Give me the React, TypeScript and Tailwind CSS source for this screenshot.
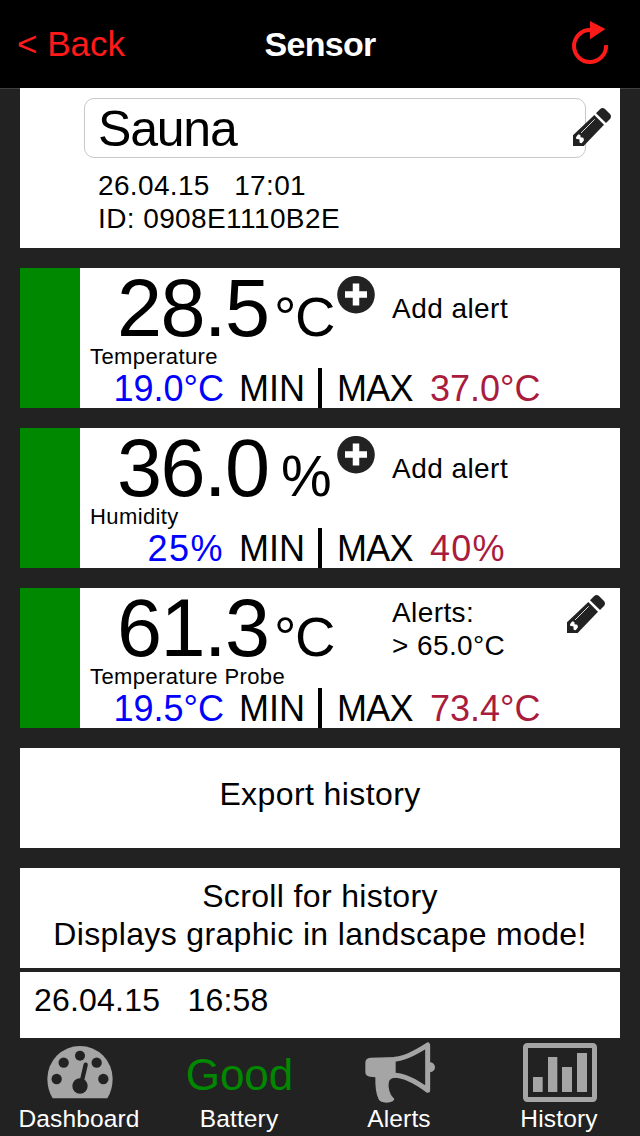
import type { ReactNode } from "react";

function RefreshIcon() {
  return (
    <svg width="40" height="46" viewBox="750 60 120 138" className="block">
      <path d="M858 135 A48 48 0 1 1 810 90" fill="none" stroke="#ff1a1a" strokeWidth="12" />
      <path d="M810 63 L856 87 L810 118 Z" fill="#ff1a1a" />
    </svg>
  );
}

function PencilIcon() {
  return (
    <svg width="38" height="38" viewBox="0 0 114 114" className="block">
      <path d="M64 21 L93 50 L32 114 H0 V82 Z" fill="#222" />
      <path d="M69 16 L81 4 Q88 -3 96 3 L111 18 Q117 26 111 33 L99 45 Z" fill="#222" />
      <path d="M24 75 L65 34" stroke="#fff" strokeWidth="2.5" />
      <path d="M9 88 L16 79 L22 81 L23 88 L31 89 L33 97 L26 106 L20 104 L19 94 L10 93 Z" fill="#fff" />
    </svg>
  );
}

function PlusIcon() {
  return (
    <svg width="38" height="38" viewBox="0 0 38 38" className="block">
      <circle cx="19" cy="18.7" r="18.8" fill="#222" />
      <path d="M19 7.5 V29.5 M8 18.5 H30" stroke="#fff" strokeWidth="6.5" strokeLinejoin="round" />
    </svg>
  );
}

function GaugeIcon() {
  return (
    <svg width="66" height="53" viewBox="140 48 198 159" className="block">
      <path d="M157 205 Q141 178 141 146 A98 98 0 0 1 337 146 Q337 178 321 205 Z" fill="#a5a5a5" />
      <g fill="#222">
        <circle cx="239" cy="77" r="15" />
        <circle cx="190" cy="98" r="15.5" />
        <circle cx="289" cy="98" r="15.5" />
        <circle cx="169" cy="147" r="15.5" />
        <circle cx="309" cy="147" r="15.5" />
        <circle cx="239" cy="168" r="23" />
      </g>
      <path d="M243 160 L256 104" stroke="#222" strokeWidth="13" strokeLinecap="round" />
    </svg>
  );
}

function MegaphoneIcon() {
  return (
    <svg width="71" height="61" viewBox="134 36 213 183" className="block">
      <path
        d="M150 83 L226 81 V143 Q214 143 208 150 Q202 162 207 182 Q210 196 222 207 Q221 216 198 218 Q180 218 175 208 Q164 188 165 142 L150 140 Q135 139 135 126 V98 Q135 84 150 83 Z"
        fill="#a5a5a5"
      />
      <path
        d="M222 88 Q258 86 322 45 V181 Q262 136 222 136"
        fill="none"
        stroke="#a5a5a5"
        strokeWidth="15"
        strokeLinejoin="round"
      />
      <path d="M329 97 A15 15 0 0 1 329 127 Z" fill="#a5a5a5" />
    </svg>
  );
}

function ChartIcon() {
  return (
    <svg width="74" height="59" viewBox="609 39 222 177" className="block">
      <rect x="616.5" y="46.5" width="207" height="162" rx="5" fill="none" stroke="#a5a5a5" strokeWidth="15" />
      <path d="M639 141h29v45h-29z M684 81h28v105h-28z M726 111h30v75h-30z M771 69h30v117h-30z" fill="#a5a5a5" />
    </svg>
  );
}

type MetricProps = {
  value: string;
  unit: string;
  label: string;
  min: string;
  max: string;
  children: ReactNode;
};

function Metric({ value, unit, label, min, max, children }: MetricProps) {
  const percent = unit === "%";
  return (
    <section className="flex h-[140px] bg-white">
      <div className="w-[60px] shrink-0 bg-[#008800]" />
      <div className="flex-1">
        <div className="flex h-20">
          <div className="flex w-[257px] shrink-0 items-baseline pl-[37px]">
            <span className="w-[157px] text-[81px] leading-[80px] tracking-[-1.5px]">{value}</span>
            <span
              className={
                percent ? "pl-[7px] text-[57px] leading-none" : "text-[56px] leading-none tracking-[-1.5px]"
              }
            >
              {unit}
            </span>
          </div>
          {children}
        </div>
        <div className="pl-[10px] text-[22px] leading-[17px] tracking-[0.4px]">{label}</div>
        <div className="mt-[3px] flex h-10 text-[36px] leading-[41px]">
          <span
            className={
              percent
                ? "w-[144px] text-right tracking-[1.5px] text-[#0000ff]"
                : "w-[144px] text-right text-[#0000ff]"
            }
          >
            {min}
          </span>
          <span className="w-[94px] pl-[15px]">MIN</span>
          <span className="w-1 bg-black" />
          <span className="w-[108px] pl-[15px] tracking-[-0.8px]">MAX</span>
          <span className={percent ? "tracking-[1.2px] text-[#a91c3e]" : "text-[#a91c3e]"}>{max}</span>
        </div>
      </div>
    </section>
  );
}

function AddAlert() {
  return (
    <>
      <div className="pt-2">
        <PlusIcon />
      </div>
      <span className="pt-6 pl-[17px] text-[28px] leading-[33px] tracking-[0.45px]">Add alert</span>
    </>
  );
}

function Tab({ label, children }: { label: string; children: ReactNode }) {
  return (
    <div className="flex w-40 flex-col items-center">
      <div className="flex h-[67px] items-start justify-center">{children}</div>
      <span className="pr-[2px] text-[24.5px] leading-[28px] tracking-[0.15px] text-white">{label}</span>
    </div>
  );
}

export default function App() {
  return (
    <div
      className="flex h-[1136px] w-[640px] flex-col overflow-hidden bg-[#222222] text-black"
      style={{ fontFamily: '"Liberation Sans", Arial, sans-serif' }}
    >
      <header className="grid h-[88px] shrink-0 grid-cols-3 bg-black leading-[88px]">
        <span className="pl-[17px] text-[35px] text-[#ff1a1a]">&lt; Back</span>
        <span className="text-center text-[34px] font-bold tracking-[-0.7px] text-white">Sensor</span>
        <div className="flex justify-end pt-5 pr-[30px]">
          <RefreshIcon />
        </div>
      </header>

      <main className="flex h-[950px] shrink-0 flex-col border-t border-[#404040] px-5">
        <section className="relative -mt-px h-40 shrink-0 bg-white pt-[10px] pl-16">
          <div className="h-[60px] w-[502px] rounded-[10px] border border-[#c8c8c8] pl-[13px] text-[50px] leading-[60px] tracking-[-1.2px]">
            Sauna
          </div>
          <div className="absolute top-5 left-[553px]">
            <PencilIcon />
          </div>
          <div className="pt-[11px] pl-[14px] text-[28px] leading-[33px]">
            <div className="whitespace-pre tracking-[0.35px]">26.04.15   17:01</div>
            <div className="tracking-[0.4px]">ID: 0908E1110B2E</div>
          </div>
        </section>

        <div className="mt-5 flex flex-col gap-5">
          <Metric value="28.5" unit="°C" label="Temperature" min="19.0°C" max="37.0°C">
            <AddAlert />
          </Metric>
          <Metric value="36.0" unit="%" label="Humidity" min="25%" max="40%">
            <AddAlert />
          </Metric>
          <Metric value="61.3" unit="°C" label="Temperature Probe" min="19.5°C" max="73.4°C">
            <div className="w-[174px] pt-2 pl-[55px] text-[28px] leading-[33px] tracking-[0.4px]">
              <div>Alerts:</div>
              <div className="whitespace-nowrap">&gt; 65.0°C</div>
            </div>
            <div className="pt-[7px] pl-[56px]">
              <PencilIcon />
            </div>
          </Metric>
          <section className="h-[100px] bg-white text-center text-[32px] leading-[92px] tracking-[0.4px]">
            Export history
          </section>
          <section>
            <div className="h-[100px] bg-white pt-[9px] text-center text-[32px] leading-[38px] tracking-[0.35px]">
              <div>Scroll for history</div>
              <div>Displays graphic in landscape mode!</div>
            </div>
            <div className="mt-1 h-[66px] bg-white pl-[14px] text-[32px] leading-[56px] tracking-[0.2px] whitespace-pre">
              26.04.15   16:58
            </div>
          </section>
        </div>
      </main>

      <footer className="flex h-[98px] shrink-0">
        <Tab label="Dashboard">
          <div className="pt-2">
            <GaugeIcon />
          </div>
        </Tab>
        <Tab label="Battery">
          <span className="pr-px text-[44px] leading-[73px] text-[#008800]">Good</span>
        </Tab>
        <Tab label="Alerts">
          <div className="pt-1">
            <MegaphoneIcon />
          </div>
        </Tab>
        <Tab label="History">
          <div className="pt-[5px]">
            <ChartIcon />
          </div>
        </Tab>
      </footer>
    </div>
  );
}
